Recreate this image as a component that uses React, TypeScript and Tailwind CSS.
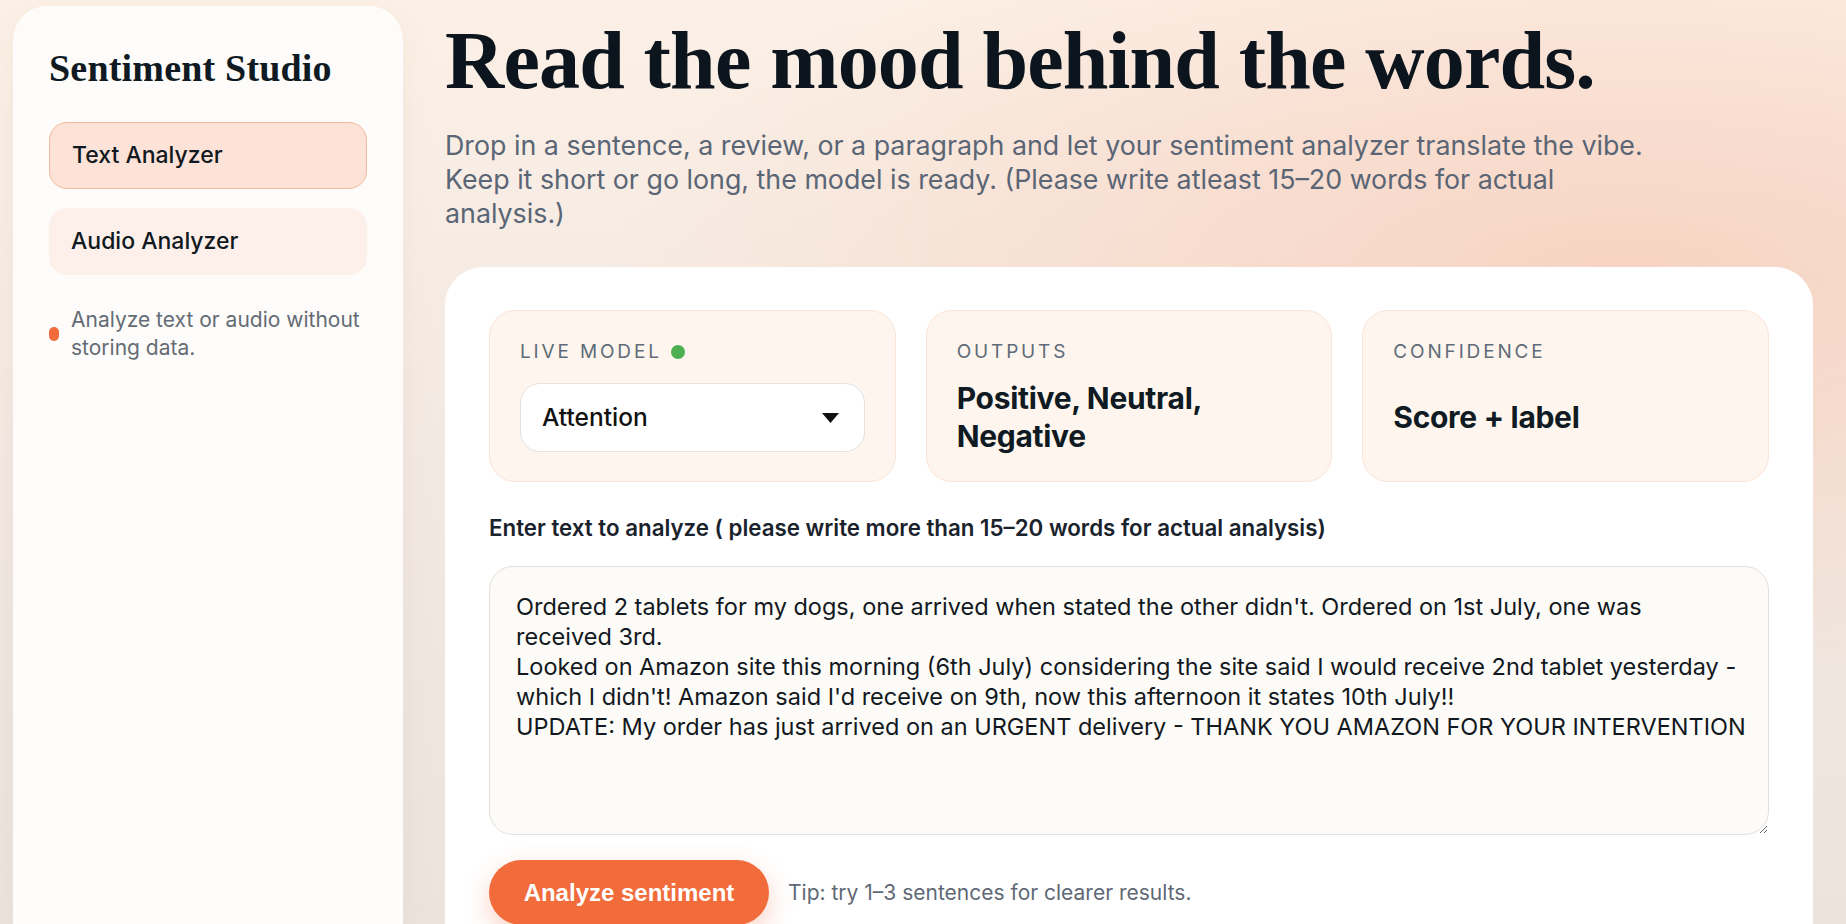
import React from "react";

const SANS = "font-['Inter','Noto_Sans',sans-serif]";

function StatCard({ children }: { children: React.ReactNode }) {
  return (
    <div className="flex flex-col rounded-[26px] border border-[#fbe4d8] bg-[#fef6ee] px-[30px] pt-[29px] pb-[26px]">
      {children}
    </div>
  );
}

function Label({ children }: { children: React.ReactNode }) {
  return (
    <div className="flex items-center gap-[9px] text-[19px] leading-[24px] tracking-[0.15em] text-[#5f6b78] uppercase">
      {children}
    </div>
  );
}

export default function App() {
  const text =
    "Ordered 2 tablets for my dogs, one arrived when stated the other didn't. Ordered on 1st July, one was\nreceived 3rd.\nLooked on Amazon site this morning (6th July) considering the site said I would receive 2nd tablet yesterday -\nwhich I didn't! Amazon said I'd receive on 9th, now this afternoon it states 10th July!!\nUPDATE: My order has just arrived on an URGENT delivery - THANK YOU AMAZON FOR YOUR INTERVENTION";

  return (
    <div
      className={`${SANS} flex h-screen w-full overflow-hidden bg-[radial-gradient(ellipse_at_88%_30%,rgba(248,203,183,0.75),rgba(248,203,183,0)_45%),linear-gradient(180deg,#fcf0e6_0%,#f1e8e1_55%,#ebe3dc_100%)]`}
    >
      {/* Sidebar */}
      <aside className="ml-[13px] mt-[6px] flex w-[390px] shrink-0 flex-col rounded-t-[34px] bg-[#fefcfa] px-[36px] pt-[40px] shadow-[0_10px_30px_rgba(180,140,120,0.08)]">
        <h2 className="font-['Liberation_Serif',serif] text-[38px] leading-[44px] font-bold tracking-[0.005em] text-[#0f1a22]">
          Sentiment Studio
        </h2>
        <nav className="mt-[32px] flex flex-col gap-[19px]">
          <button className="flex h-[67px] items-center rounded-[18px] border border-[#f4b89b] bg-[#fde2d8] pl-[22px] text-left text-[23px] font-medium text-[#101820]">
            Text Analyzer
          </button>
          <button className="flex h-[67px] items-center rounded-[18px] bg-[#fdf0eb] pl-[22px] text-left text-[23px] font-medium text-[#101820]">
            Audio Analyzer
          </button>
        </nav>
        <div className="mt-[31px] flex items-center gap-[12px]">
          <span className="h-[14px] w-[10px] shrink-0 rounded-full bg-[#f26b3b]" />
          <p className="text-[21px] leading-[28px] text-[#646b74]">
            Analyze text or audio without storing data.
          </p>
        </div>
      </aside>

      {/* Main */}
      <main className="ml-[42px] mr-[33px] flex min-w-0 flex-1 flex-col pt-[20px]">
        <h1 className="font-['Liberation_Serif',serif] text-[82px] leading-[82px] font-bold tracking-[-0.01em] text-[#0c151d]">
          Read the mood behind the words.
        </h1>
        <p className="mt-[26px] max-w-[1215px] text-[26.8px] leading-[34px] text-[#5a6575]">
          Drop in a sentence, a review, or a paragraph and let your sentiment analyzer translate the vibe. Keep it short or go long, the model is ready. (Please write atleast 15–20 words for actual analysis.)
        </p>

        <section className="mt-[37px] flex-1 rounded-t-[38px] bg-white px-[44px] pt-[43px]">
          <div className="grid grid-cols-3 gap-[30px]">
            <StatCard>
              <Label>
                Live Model
                <span className="h-[14px] w-[14px] rounded-full bg-[#4caf50]" />
              </Label>
              <div className="mt-[19px] flex h-[69px] items-center justify-between rounded-[20px] border border-[#e4e1df] bg-white pl-[21px] pr-[25px]">
                <span className="text-[24.5px] font-medium text-[#111]">Attention</span>
                <svg width="17" height="10" viewBox="0 0 17 10">
                  <polygon points="0,0 17,0 8.5,10" fill="#111" />
                </svg>
              </div>
            </StatCard>
            <StatCard>
              <Label>Outputs</Label>
              <div className="mt-[15px] flex min-h-[76px] items-center">
                <div className="text-[30px] leading-[38px] font-bold tracking-[-0.01em] text-[#0f1a22]">
                  Positive, Neutral,
                  <br />
                  Negative
                </div>
              </div>
            </StatCard>
            <StatCard>
              <Label>Confidence</Label>
              <div className="mt-[15px] flex min-h-[76px] items-center">
                <div className="text-[30px] leading-[38px] font-bold tracking-[-0.01em] text-[#0f1a22]">
                  Score + label
                </div>
              </div>
            </StatCard>
          </div>

          <div className="mt-[32px] text-[22.3px] leading-[28px] font-semibold text-[#1a222c]">
            Enter text to analyze ( please write more than 15–20 words for actual analysis)
          </div>

          <textarea
            wrap="off"
            defaultValue={text}
            className="mt-[24px] block h-[269px] w-full overflow-hidden rounded-[24px] border border-[#e3e0dd] bg-[#fdfbf8] px-[26px] pt-[25px] text-[23.5px] leading-[30px] whitespace-pre text-[#121820] outline-none"
          />

          <div className="mt-[25px] flex items-center gap-[19px]">
            <button className="h-[65px] w-[280px] rounded-full bg-[#f26b3b] font-['Liberation_Sans',Arial,sans-serif] text-[24px] font-bold text-white shadow-[0_10px_26px_rgba(242,107,59,0.3)]">
              Analyze sentiment
            </button>
            <span className="text-[21px] text-[#5f6976]">
              Tip: try 1–3 sentences for clearer results.
            </span>
          </div>
        </section>
      </main>
    </div>
  );
}
